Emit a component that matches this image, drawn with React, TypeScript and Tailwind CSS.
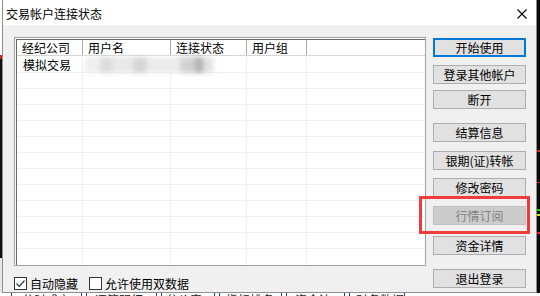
import React from "react";

const FONT = "font-['Noto_Sans_CJK_SC','Noto_Sans',sans-serif]";

function Btn({ label, mt, focus, disabled }: { label: string; mt: string; focus?: boolean; disabled?: boolean }) {
  const base = "h-[19px] w-[93px] flex items-center justify-center text-[12px] leading-none";
  let cls = "";
  if (focus) cls = "border-2 border-[#0078d7] bg-[#e1e1e1] text-black";
  else if (disabled) cls = "border border-[#bfbfbf] bg-[#cccccc] text-[#838383]";
  else cls = "border border-[#adadad] bg-[#e1e1e1] text-black";
  return <div className={`${base} ${cls} ${mt}`}>{label}</div>;
}

function Row({ first }: { first?: boolean }) {
  return (
    <div className="flex h-[16px] border-b border-[#f0f0f0] relative">
      <div className="w-[66px] border-r border-[#f0f0f0] pl-[6px] flex items-center text-[12px] leading-none">
        {first ? "模拟交易" : ""}
      </div>
      <div className="w-[88px] border-r border-[#f0f0f0]" />
      <div className="w-[76px] border-r border-[#f0f0f0]" />
      <div className="w-[60px] border-r border-[#f0f0f0]" />
      <div className="flex-1" />
      {first ? (
        <div className="absolute left-[68px] top-[0px] flex h-[16px] blur-[2.5px]">
          <div className="w-[15px] bg-[#efefef]" />
          <div className="w-[13px] bg-[#dcdcdc]" />
          <div className="w-[20px] bg-[#e9e9e9]" />
          <div className="w-[14px] bg-[#d6d6d6]" />
          <div className="w-[33px] bg-[#ececec]" />
          <div className="w-[15px] bg-[#d2d2d2]" />
          <div className="w-[8px] bg-[#b2b2b2]" />
          <div className="w-[10px] bg-[#e2e2e2]" />
        </div>
      ) : null}
    </div>
  );
}

export default function App() {
  const rows = Array.from({ length: 12 });
  return (
    <div className={`w-[540px] h-[296px] bg-white relative overflow-hidden ${FONT} text-black`}>
      <div className="flex h-[293px]">
        {/* left background strip */}
        <div className="w-[2px] flex flex-col">
          <div className="h-[55px] bg-white" />
          <div className="h-[4px] bg-[#d02020]" />
          <div className="h-[199px] bg-[#101010]" />
          <div className="flex-1 bg-[#e8e8e8]" />
        </div>
        {/* window */}
        <div className="w-[535px] h-full border-l border-r border-b border-[#8f8f8f] flex flex-col bg-[#f0f0f0]">
          <div className="h-[25px] bg-white flex items-center justify-between pl-[3px] pr-[8px] pt-[2px]">
            <span className="text-[12px] leading-none">交易帐户连接状态</span>
            <svg width="10" height="10" viewBox="0 0 10 10" className="mr-[1px]">
              <path d="M0.5 0.5 L9.5 9.5 M9.5 0.5 L0.5 9.5" stroke="#000" strokeWidth="1.1" fill="none" />
            </svg>
          </div>
          <div className="flex-1 flex">
            <div className="flex flex-col pl-[11px] pt-[12px]">
              {/* list view */}
              <div className="w-[412px] h-[229px] border border-[#a0a0a0] bg-white">
                <div className="w-full h-full border-t border-l border-white">
                  <div className="w-full h-full border-t border-l border-[#696969] flex flex-col overflow-hidden">
                    <div className="flex h-[23px] border-b border-[#d5d5d5]">
                      <div className="w-[66px] border-r border-[#a9a9a9] pl-[5px] flex items-center text-[12px] leading-none">经纪公司</div>
                      <div className="w-[88px] border-r border-[#a9a9a9] pl-[5px] flex items-center text-[12px] leading-none">用户名</div>
                      <div className="w-[76px] border-r border-[#a9a9a9] pl-[5px] flex items-center text-[12px] leading-none">连接状态</div>
                      <div className="w-[60px] border-r border-[#a9a9a9] pl-[5px] flex items-center text-[12px] leading-none">用户组</div>
                      <div className="flex-1" />
                    </div>
                    <div className="pt-[1px] flex flex-col">
                      {rows.map((_, i) => (
                        <Row key={i} first={i === 0} />
                      ))}
                      <div className="flex h-[16px]">
                        <div className="w-[66px] border-r border-[#f0f0f0]" />
                        <div className="w-[88px] border-r border-[#f0f0f0]" />
                        <div className="w-[76px] border-r border-[#f0f0f0]" />
                        <div className="w-[60px] border-r border-[#f0f0f0]" />
                      </div>
                    </div>
                  </div>
                </div>
              </div>
              {/* checkboxes */}
              <div className="flex items-center mt-[11px] h-[13px]">
                <div className="w-[13px] h-[13px] border border-[#333] bg-white flex items-center justify-center">
                  <svg width="11" height="11" viewBox="0 0 11 11">
                    <path d="M1.5 5.5 L4.3 8.3 L9.5 2.5" stroke="#333" strokeWidth="1.2" fill="none" />
                  </svg>
                </div>
                <span className="ml-[3px] text-[12px] leading-none">自动隐藏</span>
                <div className="ml-[11px] w-[13px] h-[13px] border border-[#333] bg-white" />
                <span className="ml-[3px] text-[12px] leading-none">允许使用双数据</span>
              </div>
            </div>
            {/* buttons */}
            <div className="flex flex-col pl-[7px]">
              <Btn label="开始使用" mt="mt-[13px]" focus />
              <Btn label="登录其他帐户" mt="mt-[8px]" />
              <Btn label="断开" mt="mt-[6px]" />
              <Btn label="结算信息" mt="mt-[14px]" />
              <Btn label="银期(证)转帐" mt="mt-[9px]" />
              <Btn label="修改密码" mt="mt-[8px]" />
              <Btn label="行情订阅" mt="mt-[9px]" disabled />
              <Btn label="资金详情" mt="mt-[11px]" />
              <Btn label="退出登录" mt="mt-[14px]" />
            </div>
          </div>
        </div>
        {/* right background strip */}
        <div className="flex-1 flex flex-col bg-[#0a0a0a]">
          <div className="h-[150px]" />
          <div className="h-[2px] bg-[#e02020]" />
          <div className="h-[30px]" />
          <div className="h-[1px] bg-[#e02020]" />
          <div className="h-[26px]" />
          <div className="h-[2px] bg-[#20d020]" />
          <div className="h-[3px]" />
          <div className="h-[2px] bg-[#e0e020]" />
          <div className="h-[16px]" />
          <div className="h-[2px] bg-[#e02020]" />
        </div>
      </div>
      {/* bottom background strip */}
      <div className="h-[3px] flex overflow-hidden bg-white text-[12px] leading-none text-[#222]">
        <div className="w-[12px] border-r border-[#2040a0]" />
        <div className="w-[70px] border-r border-[#2040a0] pl-[10px] pt-[1px]">分时成交</div>
        <div className="w-[5px] border-r border-[#2040a0]" />
        <div className="w-[70px] border-r border-[#2040a0] pl-[8px] pt-[1px]">逐笔明细</div>
        <div className="w-[5px] border-r border-[#2040a0]" />
        <div className="w-[53px] border-r border-[#2040a0] pl-[4px] pt-[1px]">分价表</div>
        <div className="w-[5px] border-r border-[#2040a0]" />
        <div className="w-[62px] border-r border-[#2040a0] pl-[6px] pt-[1px]">指标排名</div>
        <div className="w-[5px] border-r border-[#2040a0]" />
        <div className="w-[58px] border-r border-[#2040a0] pl-[8px] pt-[1px]">资金流</div>
        <div className="w-[5px] border-r border-[#2040a0]" />
        <div className="w-[55px] border-r border-[#2040a0] pl-[6px] pt-[1px]">财务数据</div>
        <div className="flex-1" />
      </div>
      {/* red annotation */}
      <div className="absolute left-[419px] top-[196px] w-[111px] h-[38px] border-[3px] border-[#ee3b3b]" />
    </div>
  );
}
